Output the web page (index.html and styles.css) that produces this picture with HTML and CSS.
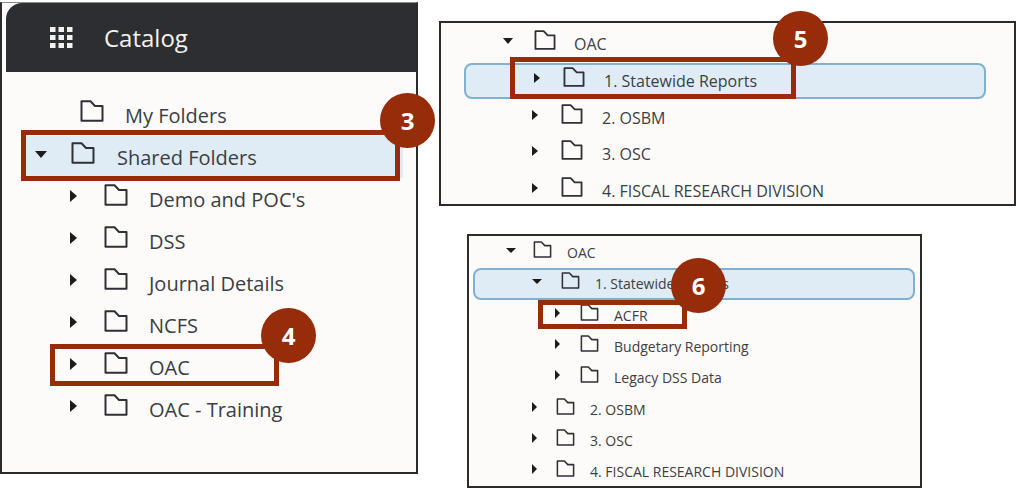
FILE: index.html
```html
<!DOCTYPE html>
<html lang="en">
<head>
    <meta charset="UTF-8">
    <meta name="viewport" content="width=device-width, initial-scale=1.0">
    <title>Catalog steps</title>
    <link rel="stylesheet" href="styles.css">
</head>
<body>
    <svg class="defs" width="0" height="0">
        <symbol id="folder" viewBox="0 0 24 22">
            <path d="M1.5 1.2 H10.5 L15 6 H22.5 V20.8 H1.5 Z" fill="none" stroke="currentColor" stroke-width="2" stroke-linejoin="round"/>
        </symbol>
    </svg>

    <!-- step 3 and 4 -->
    <section class="shot shot-a">
        <header class="bar">
            <svg class="grid-icon" viewBox="0 0 23 21">
                <rect x="0" y="0" width="5.5" height="5" /><rect x="8.5" y="0" width="5.5" height="5" /><rect x="17" y="0" width="5.5" height="5" />
                <rect x="0" y="8" width="5.5" height="5" /><rect x="8.5" y="8" width="5.5" height="5" /><rect x="17" y="8" width="5.5" height="5" />
                <rect x="0" y="16" width="5.5" height="5" /><rect x="8.5" y="16" width="5.5" height="5" /><rect x="17" y="16" width="5.5" height="5" />
            </svg>
            <h1>Catalog</h1>
        </header>
        <ul class="tree">
            <li class="row top-leaf"><svg class="folder"><use href="#folder"/></svg><span>My Folders</span></li>
            <li class="row top selected"><i class="caret down"></i><svg class="folder"><use href="#folder"/></svg><span>Shared Folders</span></li>
            <li class="row child"><i class="caret"></i><svg class="folder"><use href="#folder"/></svg><span>Demo and POC's</span></li>
            <li class="row child"><i class="caret"></i><svg class="folder"><use href="#folder"/></svg><span>DSS</span></li>
            <li class="row child"><i class="caret"></i><svg class="folder"><use href="#folder"/></svg><span>Journal Details</span></li>
            <li class="row child"><i class="caret"></i><svg class="folder"><use href="#folder"/></svg><span>NCFS</span></li>
            <li class="row child"><i class="caret"></i><svg class="folder"><use href="#folder"/></svg><span>OAC</span></li>
            <li class="row child"><i class="caret"></i><svg class="folder"><use href="#folder"/></svg><span>OAC - Training</span></li>
        </ul>
    </section>

    <!-- step 5 -->
    <section class="shot shot-b">
        <ul class="tree">
            <li class="row top"><i class="caret down"></i><svg class="folder"><use href="#folder"/></svg><span>OAC</span></li>
            <li class="row child selected"><i class="caret"></i><svg class="folder"><use href="#folder"/></svg><span>1. Statewide Reports</span></li>
            <li class="row child"><i class="caret"></i><svg class="folder"><use href="#folder"/></svg><span>2. OSBM</span></li>
            <li class="row child"><i class="caret"></i><svg class="folder"><use href="#folder"/></svg><span>3. OSC</span></li>
            <li class="row child"><i class="caret"></i><svg class="folder"><use href="#folder"/></svg><span>4. FISCAL RESEARCH DIVISION</span></li>
        </ul>
    </section>

    <!-- step 6 -->
    <section class="shot shot-c">
        <ul class="tree">
            <li class="row top"><i class="caret down"></i><svg class="folder"><use href="#folder"/></svg><span>OAC</span></li>
            <li class="row child selected"><i class="caret down"></i><svg class="folder"><use href="#folder"/></svg><span>1. Statewide Reports</span></li>
            <li class="row grandchild"><i class="caret"></i><svg class="folder"><use href="#folder"/></svg><span>ACFR</span></li>
            <li class="row grandchild"><i class="caret"></i><svg class="folder"><use href="#folder"/></svg><span>Budgetary Reporting</span></li>
            <li class="row grandchild"><i class="caret"></i><svg class="folder"><use href="#folder"/></svg><span>Legacy DSS Data</span></li>
            <li class="row child"><i class="caret"></i><svg class="folder"><use href="#folder"/></svg><span>2. OSBM</span></li>
            <li class="row child"><i class="caret"></i><svg class="folder"><use href="#folder"/></svg><span>3. OSC</span></li>
            <li class="row child"><i class="caret"></i><svg class="folder"><use href="#folder"/></svg><span>4. FISCAL RESEARCH DIVISION</span></li>
        </ul>
    </section>

    <!-- callouts drawn over the screenshots -->
    <div class="box box-3"></div>
    <div class="box box-4"></div>
    <div class="box box-5"></div>
    <div class="box box-6"></div>
    <div class="badge badge-3">3</div>
    <div class="badge badge-4">4</div>
    <div class="badge badge-5">5</div>
    <div class="badge badge-6">6</div>
</body>
</html>
```

FILE: styles.css
```css
* {
    margin: 0;
    padding: 0;
    box-sizing: border-box;
}
body {
    position: relative;
    width: 1016px;
    height: 488px;
    overflow: hidden;
    background: #fff;
    color: #3b3e44;
    font-family: "Open Sans", "Noto Sans", sans-serif;
}
.defs {
    position: absolute;
}
.shot {
    position: absolute;
    background: #fdfbfa;
    border: 2px solid #2b2b2b;
}
.shot-a {
    left: 0;
    top: 2px;
    width: 418px;
    height: 472px;
    padding-left: 4px;
    border-top: 1px solid #8a8a8a;
}
.shot-b {
    left: 439px;
    top: 21px;
    width: 577px;
    height: 185px;
}
.shot-c {
    left: 467px;
    top: 234px;
    width: 455px;
    height: 254px;
}

.bar {
    display: flex;
    align-items: center;
    height: 69px;
    padding-left: 44px;
    gap: 31px;
    background: #2c2e31;
    border-top-left-radius: 16px;
    color: #f4f2ee;
}
.grid-icon {
    width: 23px;
    height: 21px;
    fill: #f4f2ee;
}
.bar h1 {
    font-size: 24px;
    font-weight: 400;
}

.tree {
    list-style: none;
}
.row {
    display: flex;
    align-items: center;
}
.row span {
    white-space: nowrap;
}
.caret {
    flex: none;
    width: 0;
    height: 0;
    border-style: solid;
    border-color: transparent transparent transparent #1c1c1c;
    border-width: 6px 0 6px 7px;
}
.caret.down {
    border-color: #1c1c1c transparent transparent transparent;
    border-width: 7px 6px 0 6px;
}
.folder {
    flex: none;
    color: #2f3136;
}

/* left screenshot */
.shot-a .tree {
    padding-top: 22px;
}
.shot-a .row {
    height: 42px;
    font-size: 20px;
}
.shot-a .folder {
    width: 24px;
    height: 22px;
    margin-bottom: 8px;
}
.shot-a .caret {
    margin-bottom: 6px;
}
.shot-a .top-leaf {
    padding-left: 74px;
}
.shot-a .top-leaf .folder {
    margin-right: 21px;
}
.shot-a .top {
    padding-left: 29px;
}
.shot-a .top .folder {
    margin: 0 22px 8px 24px;
}
.shot-a .child {
    padding-left: 64px;
}
.shot-a .child .folder {
    margin: 0 21px 8px 27px;
}
.shot-a .selected {
    margin: 0 13px 0 18px;
    padding-left: 11px;
    background: #dfecf6;
}

/* top right screenshot */
.shot-b .tree {
    padding-top: 3px;
}
.shot-b .row {
    height: 36.7px;
    font-size: 16px;
}
.shot-b .folder {
    width: 22px;
    height: 20px;
    margin-bottom: 8px;
}
.shot-b .caret {
    border-width: 5px 0 5px 6px;
    margin-bottom: 6px;
}
.shot-b .caret.down {
    border-width: 6px 5px 0 5px;
}
.shot-b .top {
    padding-left: 62px;
}
.shot-b .top .folder {
    margin: 0 18px 8px 21px;
}
.shot-b .child {
    padding-left: 91px;
}
.shot-b .child .folder {
    margin: 0 19px 8px 23px;
}
.shot-b .selected {
    margin: 0 28px 0 23px;
    padding-left: 68px;
    background: #dfecf6;
    border: 2px solid #7fb2cf;
    border-radius: 8px;
}

/* bottom right screenshot */
.shot-c .tree {
    padding-top: 1px;
}
.shot-c .row {
    height: 31.3px;
    font-size: 14px;
}
.shot-c .folder {
    width: 19px;
    height: 17px;
    margin-bottom: 6px;
}
.shot-c .caret {
    border-width: 5px 0 5px 5px;
    margin-bottom: 5px;
}
.shot-c .caret.down {
    border-width: 5px 5px 0 5px;
}
.shot-c .top {
    padding-left: 37px;
}
.shot-c .top .folder {
    margin: 0 15px 6px 17px;
}
.shot-c .child {
    padding-left: 63px;
}
.shot-c .child .folder {
    margin: 0 15px 6px 19px;
}
.shot-c .selected {
    margin: 0 5px 0 4px;
    padding-left: 57px;
    background: #dfecf6;
    border: 2px solid #7fb2cf;
    border-radius: 8px;
}
.shot-c .grandchild {
    padding-left: 86px;
}
.shot-c .grandchild .folder {
    margin: 0 15px 6px 20px;
}

/* callouts */
.box {
    position: absolute;
    border: 5px solid #962c0a;
}
.box-3 {
    left: 21px;
    top: 130px;
    width: 379px;
    height: 51px;
}
.box-4 {
    left: 50px;
    top: 344px;
    width: 229px;
    height: 42px;
}
.box-5 {
    left: 510px;
    top: 57px;
    width: 286px;
    height: 42px;
}
.box-6 {
    left: 538px;
    top: 300px;
    width: 149px;
    height: 29px;
}
.badge {
    position: absolute;
    width: 55px;
    height: 55px;
    border-radius: 50%;
    background: #962c0a;
    color: #fff;
    font-size: 24px;
    font-weight: 700;
    line-height: 55px;
    text-align: center;
}
.badge-3 {
    left: 380px;
    top: 93px;
}
.badge-4 {
    left: 261px;
    top: 308px;
}
.badge-5 {
    left: 773px;
    top: 11px;
}
.badge-6 {
    left: 671px;
    top: 258px;
}
```
